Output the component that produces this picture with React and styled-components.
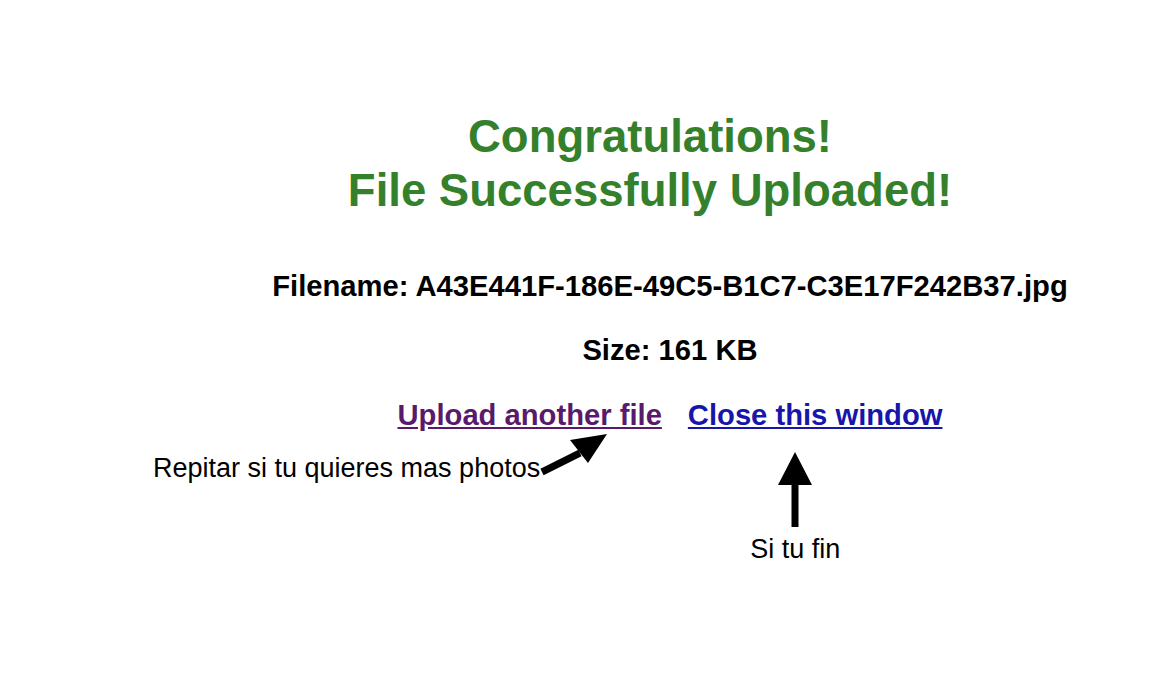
import React from "react";
import styled, { createGlobalStyle } from "styled-components";

const GlobalStyle = createGlobalStyle`
  body {
    margin: 0;
    background: #ffffff;
    font-family: "Liberation Sans", Arial, sans-serif;
  }
`;

const Page = styled.div`
  width: 1159px;
  min-height: 677px;
  padding-top: 110px;
  box-sizing: border-box;
`;

const Content = styled.div`
  display: flex;
  flex-direction: column;
  align-items: center;
  padding-left: 181px;
  text-align: center;
`;

const Heading = styled.h1`
  margin: 0;
  padding-right: 40px;
  font-size: 45.5px;
  line-height: 54px;
  font-weight: bold;
  color: #35802b;
`;

const InfoLine = styled.p`
  margin: ${(props) => props.$top}px 0 0;
  font-size: 29.2px;
  line-height: 34px;
  font-weight: bold;
  color: #000;
  white-space: nowrap;
`;

const Links = styled.div`
  display: flex;
  gap: 26px;
  margin-top: 31px;
`;

const Link = styled.a`
  font-size: 29.2px;
  line-height: 34px;
  font-weight: bold;
  color: ${(props) => (props.$visited ? "#5a1a6b" : "#1616aa")};
  text-decoration: underline;
  cursor: pointer;
`;

const NoteRow = styled.div`
  display: flex;
  align-items: flex-start;
  padding-left: 153px;
  margin-top: 0;
`;

const LeftNote = styled.div`
  display: flex;
  align-items: flex-end;
`;

const RightNote = styled.div`
  display: flex;
  flex-direction: column;
  align-items: center;
  width: 90px;
  margin-left: 140px;
  padding-top: 20px;
`;

const NoteText = styled.span`
  font-size: 27px;
  line-height: 32px;
  color: #000;
  white-space: nowrap;
`;

const NoteTextBelow = styled(NoteText)`
  margin-top: 5px;
`;

function DiagonalArrow() {
  return (
    <svg width="70" height="52" viewBox="0 0 70 52">
      <line x1="2" y1="40" x2="40" y2="21" stroke="#000" strokeWidth="7" />
      <polygon points="67,2 30,8 48,31" fill="#000" />
    </svg>
  );
}

function UpArrow() {
  return (
    <svg width="36" height="76" viewBox="0 0 36 76">
      <rect x="14.5" y="30" width="7" height="45" fill="#000" />
      <polygon points="18,0 1,33 35,33" fill="#000" />
    </svg>
  );
}

export default function App() {
  return (
    <>
      <GlobalStyle />
      <Page>
        <Content>
          <Heading>
            Congratulations!
            <br />
            File Successfully Uploaded!
          </Heading>
          <InfoLine $top={51}>
            Filename: A43E441F-186E-49C5-B1C7-C3E17F242B37.jpg
          </InfoLine>
          <InfoLine $top={30}>Size: 161 KB</InfoLine>
          <Links>
            <Link $visited>Upload another file</Link>
            <Link>Close this window</Link>
          </Links>
        </Content>
        <NoteRow>
          <LeftNote>
            <NoteText>Repitar si tu quieres mas photos</NoteText>
            <DiagonalArrow />
          </LeftNote>
          <RightNote>
            <UpArrow />
            <NoteTextBelow>Si tu fin</NoteTextBelow>
          </RightNote>
        </NoteRow>
      </Page>
    </>
  );
}
